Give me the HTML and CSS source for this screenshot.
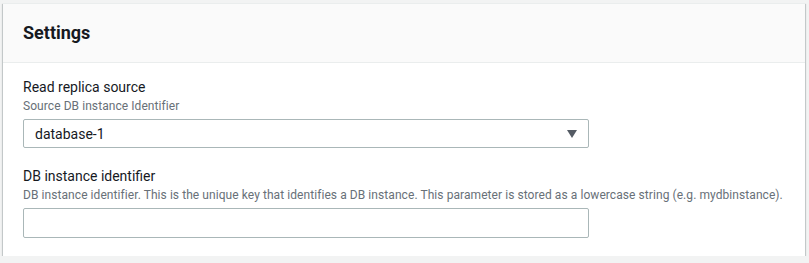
FILE: index.html
```html
<!DOCTYPE html>
<html lang="en">
<head>
    <meta charset="UTF-8" />
    <title>Settings</title>
    <link rel="stylesheet" href="styles.css">
</head>
<body>
    <div class="card">
        <!-- Card header -->
        <div class="card-header">
            <h2>Settings</h2>
        </div>

        <div class="card-body">
            <!-- Read replica source -->
            <div class="field">
                <div class="field-label">Read replica source</div>
                <div class="field-desc">Source DB instance Identifier</div>
                <div class="select">
                    <span>database-1</span>
                    <svg class="caret" width="10" height="8" viewBox="0 0 10 8">
                        <path d="M0 0 H10 L5 8 Z" fill="#545b64" />
                    </svg>
                </div>
            </div>

            <!-- DB instance identifier -->
            <div class="field">
                <div class="field-label">DB instance identifier</div>
                <div class="field-desc">DB instance identifier. This is the unique key that identifies a DB instance. This parameter is stored as a lowercase string (e.g. mydbinstance).</div>
                <input class="text-input" type="text" />
            </div>
        </div>
    </div>
</body>
</html>
```

FILE: styles.css
```css
body, html {
    margin: 0;
    padding: 0;
    background-color: #f2f3f3;
    font-family: Roboto, 'Open Sans', sans-serif;
    color: #16191f;
}

body {
    padding: 3px 4px 0 3px;
}

.card {
    background-color: white;
    border-top: 1px solid #eaeded;
    box-shadow: 0 1px 1px 0 rgba(0, 28, 36, 0.3),
                1px 1px 1px 0 rgba(0, 28, 36, 0.15),
                -1px 1px 1px 0 rgba(0, 28, 36, 0.15);
}

.card-header {
    background-color: #fafafa;
    border-bottom: 1px solid #eaeded;
    padding: 18px 20px;
}

.card-header h2 {
    margin: 0;
    font-size: 18px;
    line-height: 22px;
    font-weight: 700;
}

.card-body {
    padding: 13px 20px 18px;
}

.field + .field {
    margin-top: 17px;
}

.field-label {
    font-size: 14px;
    line-height: 22px;
}

.field-desc {
    font-size: 12px;
    line-height: 16px;
    color: #687078;
    margin-bottom: 5px;
    white-space: nowrap;
    letter-spacing: 0.07px;
}

/* Dropdown */
.select {
    width: 566px;
    height: 29px;
    box-sizing: border-box;
    border: 1px solid #aab7b8;
    border-radius: 2px;
    padding: 0 11px 0 11px;
    display: flex;
    align-items: center;
    justify-content: space-between;
    font-size: 14px;
}

.text-input {
    display: block;
    width: 566px;
    height: 30px;
    box-sizing: border-box;
    border: 1px solid #aab7b8;
    border-radius: 2px;
    margin: 0;
    padding: 0 11px;
    font-family: inherit;
    font-size: 14px;
}
```
